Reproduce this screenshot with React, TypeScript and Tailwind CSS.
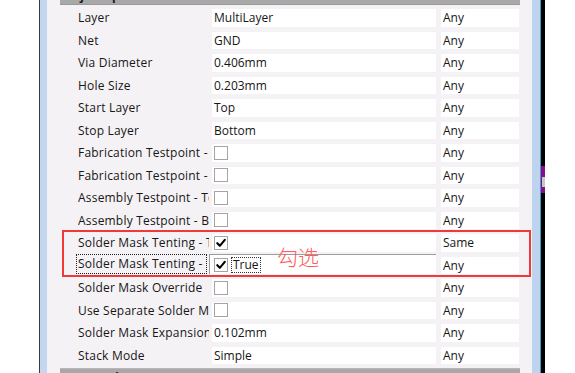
import React from "react";

type Val =
  | { k: "text"; v: string }
  | { k: "cb"; checked: boolean }
  | { k: "editor" };

const rows: { label: string; val: Val; third: string }[] = [
  { label: "Layer", val: { k: "text", v: "MultiLayer" }, third: "Any" },
  { label: "Net", val: { k: "text", v: "GND" }, third: "Any" },
  { label: "Via Diameter", val: { k: "text", v: "0.406mm" }, third: "Any" },
  { label: "Hole Size", val: { k: "text", v: "0.203mm" }, third: "Any" },
  { label: "Start Layer", val: { k: "text", v: "Top" }, third: "Any" },
  { label: "Stop Layer", val: { k: "text", v: "Bottom" }, third: "Any" },
  { label: "Fabrication Testpoint - Top", val: { k: "cb", checked: false }, third: "Any" },
  { label: "Fabrication Testpoint - Bottom", val: { k: "cb", checked: false }, third: "Any" },
  { label: "Assembly Testpoint - Top", val: { k: "cb", checked: false }, third: "Any" },
  { label: "Assembly Testpoint - Bottom", val: { k: "cb", checked: false }, third: "Any" },
  { label: "Solder Mask Tenting - Top", val: { k: "cb", checked: true }, third: "Same" },
  { label: "Solder Mask Tenting - Bottom", val: { k: "editor" }, third: "Any" },
  { label: "Solder Mask Override", val: { k: "cb", checked: false }, third: "Any" },
  { label: "Use Separate Solder Mask Expansion", val: { k: "cb", checked: false }, third: "Any" },
  { label: "Solder Mask Expansion", val: { k: "text", v: "0.102mm" }, third: "Any" },
  { label: "Stack Mode", val: { k: "text", v: "Simple" }, third: "Any" },
];

function Checkbox({ checked }: { checked: boolean }) {
  return (
    <div className="w-[14px] h-[14px] border border-[#a4a4a4] bg-white flex items-center justify-center shrink-0">
      {checked && (
        <svg width="10" height="10" viewBox="0 0 10 10">
          <path d="M1.3 5.2 L3.8 7.8 L8.8 1.8" fill="none" stroke="#000" strokeWidth="2.1" strokeLinecap="round" strokeLinejoin="round" />
        </svg>
      )}
    </div>
  );
}

function Row({ label, val, third }: { label: string; val: Val; third: string }) {
  const selected = val.k === "editor";
  return (
    <div className="flex h-[17.5px] text-[12px] text-[#161616]">
      {selected ? (
        <div className="w-[152px] pl-[16px] pr-[5px] h-full flex items-end">
          <span className="h-[20px] w-[131px] border border-dotted border-[#222] px-[1px] leading-[18px] overflow-hidden whitespace-nowrap tracking-[0.2px]">
            {label}
          </span>
        </div>
      ) : (
        <div className="w-[152px] pl-[18px] pr-[3px] h-full flex items-center">
          <span className="overflow-hidden whitespace-nowrap leading-[17px] tracking-[0.2px]">{label}</span>
        </div>
      )}
      {val.k === "editor" ? (
        <div className="w-[227px] -ml-[3px] h-[20px] self-end border-t border-l border-[#9c9c9c] bg-white flex items-center pl-[4px]">
          <Checkbox checked={true} />
          <span className="ml-[3px] h-[16px] border border-dotted border-[#333] leading-[14px] px-[1px]">True</span>
        </div>
      ) : (
        <div className="w-[224px] h-full bg-white flex items-center pl-[2px] leading-[17px]">
          {val.k === "text" ? val.v : <Checkbox checked={val.checked} />}
        </div>
      )}
      <div className="w-[78px] ml-[5px] h-full bg-white flex items-center pl-[2px] leading-[17px]">{third}</div>
    </div>
  );
}

export default function App() {
  return (
    <div className="relative w-[575px] h-[373px] overflow-hidden bg-white flex font-['Open_Sans',sans-serif]">
      <div className="w-[39px] bg-white shrink-0" />
      <div className="w-[1px] bg-[#3c3c3c] shrink-0" />
      <div className="w-[7px] bg-[#c3d7f0] shrink-0" />
      <div className="w-[485px] bg-[#f5f2f5] shrink-0 flex flex-col">
        <div className="ml-[13px] w-[460px] -mt-[12px] flex flex-col">
          <div className="h-[17px] bg-[#a8a8a8] border-b border-[#9a9a9a] pl-[3px] text-[12px] font-bold leading-[16px] text-[#1a1a1a] whitespace-nowrap">
            Object Specific
          </div>
          <div className="flex flex-col gap-[5px] pt-[4px] pb-[4px]">
            {rows.map((r, i) => (
              <Row key={i} {...r} />
            ))}
          </div>
          <div className="h-[17px] bg-[#a8a8a8] border-t border-[#b8b8b8] pl-[3px] pr-[6px] text-[12px] font-bold leading-[17px] text-[#1a1a1a] whitespace-nowrap flex justify-between">
            <span>Test Markup</span>
            <span className="text-[#666] text-[10px]">︿</span>
          </div>
        </div>
      </div>
      <div className="w-[8px] bg-[#bdd3ee] shrink-0" />
      <div className="w-[1px] bg-[#3a9cc4] shrink-0" />
      <div className="w-[4px] bg-black shrink-0 flex flex-col">
        <div className="h-[166px]" />
        <div className="h-[27px] bg-[#8a0c8c] flex flex-col">
          <div className="h-[11px]" />
          <div className="h-[10px] bg-[#c8c8c8] ml-[1px]" />
        </div>
      </div>
      <div className="flex-1 bg-white" />

      <div className="absolute left-[62px] top-[230px] w-[469px] h-[47px] border-2 border-[#f03a3a] pointer-events-none" />
      <div className="absolute left-[277px] top-[246px] text-[21px] leading-none text-[#ff5c5c] font-light font-['Noto_Sans_CJK_SC',sans-serif]">
        勾选
      </div>
    </div>
  );
}
